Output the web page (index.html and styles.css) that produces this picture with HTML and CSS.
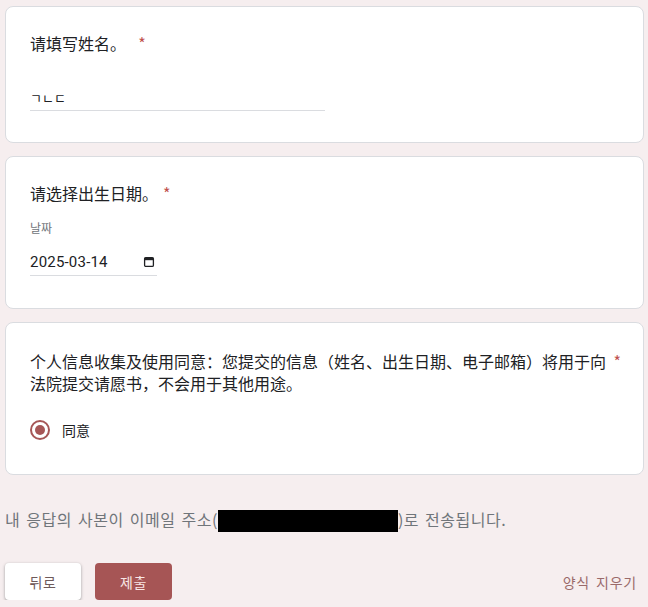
FILE: index.html
```html
<!DOCTYPE html>
<html lang="zh">
<head>
<meta charset="utf-8">
<title>Form</title>
<link rel="stylesheet" href="styles.css">
</head>
<body>
<div class="page">
  <div class="card card-name">
    <div class="title">请填写姓名。&nbsp;&nbsp;<span class="req">*</span></div>
    <div class="text-input"><span class="jamo">ㄱㄴㄷ</span></div>
  </div>

  <div class="card card-date">
    <div class="title">请选择出生日期。<span class="req">*</span></div>
    <div class="sub-label">날짜</div>
    <div class="date-input">
      <span class="date-value">2025-03-14</span>
      <svg class="cal" width="12" height="12" viewBox="0 0 12 12" aria-hidden="true">
        <rect x="1.6" y="1.6" width="8.8" height="8.8" rx="1.2" fill="none" stroke="#202124" stroke-width="1.3"/>
        <rect x="1.6" y="1.6" width="8.8" height="2.6" fill="#202124"/>
      </svg>
    </div>
  </div>

  <div class="card card-consent">
    <div class="title consent-title">
      <span class="consent-text">个人信息收集及使用同意：您提交的信息（姓名、出生日期、电子邮箱）将用于向法院提交请愿书，不会用于其他用途。</span>
      <span class="req req-float">*</span>
    </div>
    <div class="radio-row">
      <span class="radio"><span class="radio-dot"></span></span>
      <span class="radio-label">同意</span>
    </div>
  </div>

  <div class="footer-note">내 응답의 사본이 이메일 주소(<span class="redact"></span>)로 전송됩니다.</div>

  <div class="actions">
    <div class="btn-group">
      <div class="btn btn-back">뒤로</div>
      <div class="btn btn-submit">제출</div>
    </div>
    <div class="btn-clear">양식 지우기</div>
  </div>
</div>
</body>
</html>
```

FILE: styles.css
```css
html, body {
  margin: 0;
  padding: 0;
  background: #f6eeef;
}

body {
  font-family: "Noto Sans CJK SC", "Noto Sans CJK KR", sans-serif;
  color: #202124;
}

.page {
  padding: 6px 4px 0 5px;
  display: flex;
  flex-direction: column;
}

.card {
  background: #ffffff;
  border: 1px solid #dadce0;
  border-radius: 8px;
  padding: 24px 24px 31px 24px;
  margin-bottom: 13px;
}

.title {
  font-size: 16px;
  line-height: 24px;
  letter-spacing: 0;
}

.req {
  color: #c0504d;
  margin-left: 5px;
}

.text-input {
  margin-top: 29px;
  width: 295px;
  border-bottom: 1px solid #dadce0;
  padding-bottom: 2px;
  line-height: 24px;
  height: 24px;
}

.jamo {
  font-family: "Noto Sans CJK KR", sans-serif;
  font-size: 13px;
  color: #202124;
}

.card-date {
  padding-bottom: 32px;
}

.sub-label {
  font-family: "Noto Sans CJK KR", sans-serif;
  margin-top: 15px;
  font-size: 12px;
  line-height: 16px;
  color: #70757a;
}

.date-input {
  margin-top: 14px;
  width: 127px;
  height: 24px;
  border-bottom: 1px solid #dadce0;
  display: flex;
  align-items: center;
  justify-content: space-between;
  padding-bottom: 1px;
}

.date-value {
  font-family: Roboto, "Liberation Sans", sans-serif;
  font-size: 15px;
  letter-spacing: 0.2px;
  line-height: 24px;
  color: #202124;
}

.cal {
  margin-right: 2px;
}

.consent-title {
  display: flex;
  align-items: flex-start;
  justify-content: space-between;
  line-height: 22px;
  padding-top: 3px;
}

.consent-text {
  max-width: 580px;
}

.req-float {
  margin-left: 4px;
  margin-right: 0;
}

.card-consent {
  padding-bottom: 32px;
  padding-right: 22px;
}

.radio-row {
  margin-top: 24px;
  display: flex;
  align-items: center;
  height: 24px;
}

.radio {
  width: 20px;
  height: 20px;
  box-sizing: border-box;
  border: 2px solid #a65656;
  border-radius: 50%;
  display: flex;
  align-items: center;
  justify-content: center;
}

.radio-dot {
  width: 10px;
  height: 10px;
  border-radius: 50%;
  background: #a65656;
}

.radio-label {
  margin-left: 12px;
  font-size: 14px;
  line-height: 20px;
}

.footer-note {
  margin-top: 19px;
  font-family: "Noto Sans CJK KR", sans-serif;
  font-size: 16px;
  line-height: 24px;
  letter-spacing: 0.5px;
  word-spacing: 2px;
  color: #70757a;
}

.redact {
  display: inline-block;
  width: 180px;
  height: 22px;
  background: #000000;
  vertical-align: -6px;
}

.actions {
  margin-top: 31px;
  display: flex;
  align-items: center;
  justify-content: space-between;
}

.btn-group {
  display: flex;
  gap: 14px;
}

.btn {
  height: 37px;
  border-radius: 4px;
  font-family: "Noto Sans CJK KR", sans-serif;
  font-size: 14px;
  font-weight: 400;
  letter-spacing: 0.5px;
  display: flex;
  align-items: center;
  justify-content: center;
}

.btn-back {
  width: 76px;
  background: #ffffff;
  color: #6e5a5a;
  box-shadow: 0 1px 2px rgba(60, 64, 67, 0.3), 0 1px 3px 1px rgba(60, 64, 67, 0.15);
}

.btn-submit {
  width: 77px;
  background: #a65555;
  color: #f8e6e6;
}

.btn-clear {
  font-family: "Noto Sans CJK KR", sans-serif;
  font-size: 14px;
  font-weight: 400;
  letter-spacing: 0.8px;
  word-spacing: 2px;
  color: #9a6a6a;
  margin-right: 7px;
}
```
